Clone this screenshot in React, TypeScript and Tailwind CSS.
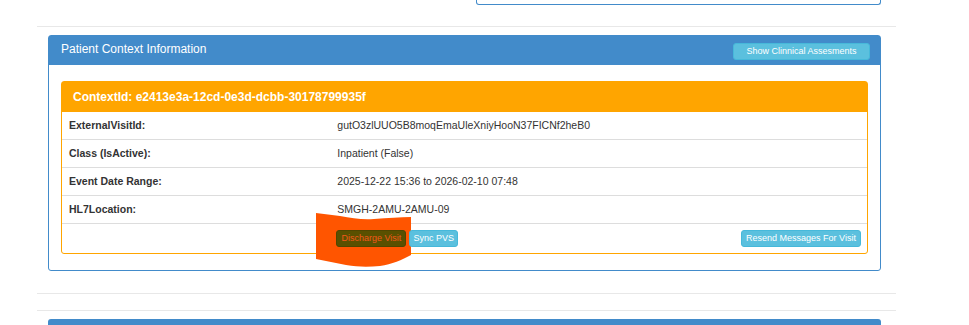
import React from 'react';

const rows = [
  { label: 'ExternalVisitId:', value: 'gutO3zlUUO5B8moqEmaUleXniyHooN37FICNf2heB0' },
  { label: 'Class (IsActive):', value: 'Inpatient (False)' },
  { label: 'Event Date Range:', value: '2025-12-22 15:36 to 2026-02-10 07:48' },
  { label: 'HL7Location:', value: 'SMGH-2AMU-2AMU-09' },
];

function XsButton({ children, className = '' }: { children: React.ReactNode; className?: string }) {
  return (
    <button className={`h-[17px] rounded-[3px] border text-[9px] leading-none ${className}`}>
      {children}
    </button>
  );
}

export default function App() {
  return (
    <div
      className="relative w-[969px] h-[325px] overflow-hidden bg-white text-[#333]"
      style={{ fontFamily: '"Liberation Sans", Arial, sans-serif' }}
    >
      {/* highlighter scribble (sits under the discharge button's tint) */}
      <svg className="absolute left-[316px] top-[212px] z-10" width="96" height="56" viewBox="0 0 96 56">
        <path
          d="M0 1 C8 2 16 3 24 4 C36 6 46 8 58 7 C72 6 84 5 95 5 L95 43 C86 48 76 52 64 54 C52 55 42 55 30 53 C20 51 10 49 0 47 Z"
          fill="#ff5500"
        />
      </svg>

      <div className="ml-[37px] w-[859px]">
        {/* bottom of the previous box */}
        <div className="flex justify-end pr-[15px]">
          <div className="w-[405px] h-[5px] border border-t-0 border-[#428bca] rounded-b-[3px]" />
        </div>
        <div className="mt-[21px] h-px bg-[#e8e8e8]" />

        {/* Patient context panel */}
        <div className="ml-[11px] mt-[8px] w-[833px] border border-[#428bca] rounded-[3px]">
          <div className="flex h-[29px] items-center justify-between bg-[#428bca] pl-[12px] pr-[10px]">
            <span className="mb-[3px] text-[12px] text-white">Patient Context Information</span>
            <XsButton className="mt-[2px] w-[137px] bg-[#5bc0de] border-[#46b8da] text-white">
              Show Clinnical Assesments
            </XsButton>
          </div>
          <div className="px-[12px] pt-[16px] pb-[16px]">
            <div className="border border-[#ffa500] rounded-[3px]">
              <div className="flex h-[30px] items-center bg-[#ffa500] px-[11px] text-[12px] font-bold text-white">
                ContextId: e2413e3a-12cd-0e3d-dcbb-30178799935f
              </div>
              {rows.map((r) => (
                <div key={r.label} className="grid grid-cols-3 h-[28px] items-center border-b border-[#ddd] text-[10.5px]">
                  <div className="pl-[7px] font-bold">{r.label}</div>
                  <div className="col-span-2 pl-[7px]">{r.value}</div>
                </div>
              ))}
              <div className="grid grid-cols-3 h-[29px] items-center">
                <div />
                <div className="col-span-2 flex items-center pl-[6px] pr-[6px]">
                  <XsButton className="relative z-20 w-[70px] bg-[#5a5000] border-[#4f4600] text-[#f2581a]">
                    Discharge Visit
                  </XsButton>
                  <XsButton className="relative z-20 ml-[3px] w-[49px] bg-[#5bc0de] border-[#46b8da] text-white">
                    Sync PVS
                  </XsButton>
                  <XsButton className="ml-auto w-[120px] bg-[#5bc0de] border-[#46b8da] text-white">
                    Resend Messages For Visit
                  </XsButton>
                </div>
              </div>
            </div>
          </div>
        </div>

        <div className="mt-[22px] h-px bg-[#e8e8e8]" />
        <div className="mt-[16px] h-px bg-[#e8e8e8]" />
        <div className="ml-[11px] mt-[8px] w-[833px] h-[20px] bg-[#428bca] rounded-t-[3px]" />
      </div>
    </div>
  );
}
